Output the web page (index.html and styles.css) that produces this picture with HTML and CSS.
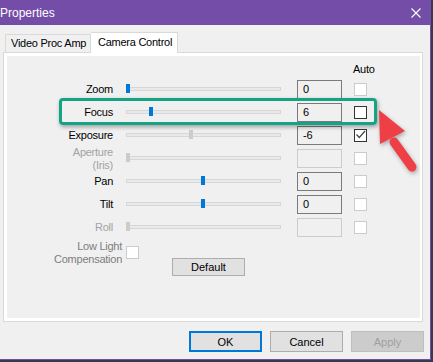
FILE: index.html
```html
<!DOCTYPE html>
<html>
<head>
    <meta charset="utf-8">
    <title>Properties</title>
    <link rel="stylesheet" href="styles.css">
</head>
<body>
    <div class="window">
        <div class="titlebar">
            <span class="title">Properties</span>
            <svg class="close" width="10" height="10" viewBox="0 0 10 10"><path d="M0.5 0.5L9.5 9.5M9.5 0.5L0.5 9.5" stroke="#fff" stroke-width="1.1" fill="none"/></svg>
        </div>

        <div class="tabs">
            <div class="tab">Video Proc Amp</div>
            <div class="tab active">Camera Control</div>
        </div>

        <div class="panel">
            <div class="page">
                <div class="auto-head">Auto</div>

                <div class="rows">
                    <div class="row">
                        <div class="label">Zoom</div>
                        <div class="slider"><div class="track"></div><div class="thumb" style="left:0px"></div></div>
                        <div class="edit">0</div>
                        <div class="check off"></div>
                    </div>
                    <div class="row">
                        <div class="label">Focus</div>
                        <div class="slider"><div class="track"></div><div class="thumb" style="left:23px"></div></div>
                        <div class="edit">6</div>
                        <div class="check"></div>
                    </div>
                    <div class="row">
                        <div class="label">Exposure</div>
                        <div class="slider"><div class="track"></div><div class="thumb grey" style="left:63px"></div></div>
                        <div class="edit">-6</div>
                        <div class="check">
                            <svg width="11" height="11" viewBox="0 0 11 11"><path d="M1.5 4.5L4.3 7.5L10 1" stroke="#444" stroke-width="1.2" fill="none"/></svg>
                        </div>
                    </div>
                    <div class="row">
                        <div class="label dim two">Aperture<br>(Iris)</div>
                        <div class="slider"><div class="track"></div><div class="thumb grey" style="left:0px"></div></div>
                        <div class="edit off"></div>
                        <div class="check off"></div>
                    </div>
                    <div class="row">
                        <div class="label">Pan</div>
                        <div class="slider"><div class="track"></div><div class="thumb" style="left:75px"></div></div>
                        <div class="edit">0</div>
                        <div class="check off"></div>
                    </div>
                    <div class="row">
                        <div class="label">Tilt</div>
                        <div class="slider"><div class="track"></div><div class="thumb" style="left:75px"></div></div>
                        <div class="edit">0</div>
                        <div class="check off"></div>
                    </div>
                    <div class="row">
                        <div class="label dim">Roll</div>
                        <div class="slider"><div class="track"></div><div class="thumb grey" style="left:0px"></div></div>
                        <div class="edit off"></div>
                        <div class="check off"></div>
                    </div>
                </div>

                <div class="extra">
                    <div class="label low two">Low Light<br>Compensation</div>
                    <div class="check off"></div>
                    <button class="btn default">Default</button>
                </div>
            </div>
        </div>

        <div class="buttons">
            <button class="btn ok">OK</button>
            <button class="btn">Cancel</button>
            <button class="btn disabled">Apply</button>
        </div>

        <!-- annotations drawn on top of the screenshot -->
        <div class="highlight"></div>
        <svg class="arrow" width="60" height="80" viewBox="0 0 60 80">
            <line x1="24" y1="42" x2="42" y2="67" stroke="#ef3f46" stroke-width="9" stroke-linecap="round"/>
            <polygon points="9,10 10,44 35,31" fill="#ef3f46"/>
        </svg>
    </div>
</body>
</html>
```

FILE: styles.css
```css
body{
    margin: 0;
    padding: 0;
    width: 433px;
    height: 362px;
    overflow: hidden;
    background-color: #363a4b;
    font-family: "Liberation Sans", Arial, sans-serif;
    font-size: 11px;
    letter-spacing: -0.25px;
    white-space: nowrap;
    color: #000;}

.window{
    position: relative;
    width: 430px;
    height: 359px;
    background-color: #f0f0f0;
    border-right: 1px solid #744da9;
    border-bottom: 1px solid #744da9;}

.titlebar{
    height: 25px;
    background-color: #744da9;
    color: #fff;
    display: flex;
    align-items: center;
    justify-content: space-between;
    padding-right: 9px;}

.title{
    font-size: 12px;
    letter-spacing: 0;}

/* tabs */
.tabs{
    display: flex;
    align-items: flex-end;
    height: 21px;
    padding-top: 7px;
    padding-left: 5px;}

.tab{
    box-sizing: border-box;
    height: 18px;
    margin-bottom: 1px;
    padding: 0 5px;
    width: 86px;
    border: 1px solid #d9d9d9;
    border-bottom: none;
    line-height: 17px;
    background-color: #f0f0f0;}

.tab.active{
    position: relative;
    z-index: 1;
    width: 87px;
    height: 21px;
    margin-bottom: 0;
    padding-left: 7px;
    line-height: 19px;
    background-color: #fff;
    border-left: none;}

.panel{
    box-sizing: border-box;
    height: 270px;
    margin: -1px 7px 0 3px;
    border: 1px solid #d9d9d9;
    background-color: #fff;
    padding: 3px 2px 3px 3px;}

.page{
    height: 100%;
    background-color: #f0f0f0;
    padding-top: 6px;
    box-sizing: border-box;}

.auto-head{
    height: 14px;
    line-height: 14px;
    margin-left: 346px;}

.rows{
    margin-top: 4px;
    display: flex;
    flex-direction: column;
    gap: 4px;}

.row{
    display: flex;
    align-items: center;
    height: 19px;}

.label{
    width: 106px;
    text-align: right;
    line-height: 19px;
    flex-shrink: 0;}

.label.two{
    line-height: 13px;}

.label.dim{color: #a2a2a2;}

.slider{
    position: relative;
    align-self: stretch;
    width: 155px;
    margin-left: 13px;}

.track{
    box-sizing: border-box;
    height: 4px;
    margin-top: 7px;
    background-color: #e7eaea;
    border: 1px solid #d6d6d6;}

.thumb{
    position: absolute;
    top: 4px;
    width: 4px;
    height: 9px;
    background-color: #0078d7;}

.thumb.grey{background-color: #cccccc;}

.edit{
    box-sizing: border-box;
    width: 45px;
    height: 19px;
    margin-left: 16px;
    padding-left: 5px;
    line-height: 17px;
    border: 1px solid #7a7a7a;
    background-color: #f0f0f0;}

.edit.off{border-color: #cccccc;}

.check{
    box-sizing: border-box;
    width: 13px;
    height: 13px;
    margin-left: 12px;
    border: 1px solid #333;
    background-color: #fff;
    display: flex;
    align-items: center;
    justify-content: center;}

.check.off{border-color: #cccccc;}

.extra{
    display: flex;
    align-items: flex-start;
    margin-top: 3px;}

.label.low{
    width: 115px;
    color: #7d7d7d;}

.extra .check{
    margin-left: 4px;
    margin-top: 6px;}

.btn{
    box-sizing: border-box;
    width: 73px;
    height: 21px;
    padding: 0;
    font: inherit;
    color: #000;
    background-color: #e1e1e1;
    border: 1px solid #adadad;}

.btn.default{
    height: 18px;
    margin-left: 33px;
    margin-top: 18px;}

.buttons{
    display: flex;
    justify-content: flex-end;
    gap: 8px;
    margin-top: 9px;
    padding-right: 6px;}

.btn.ok{border: 2px solid #0078d7;}

.btn.disabled{
    background-color: #cccccc;
    border-color: #bfbfbf;
    color: #a0a0a0;}

/* annotation overlays */
.highlight{
    position: absolute;
    left: 59px;
    top: 98px;
    width: 318px;
    height: 27px;
    box-sizing: border-box;
    border: 3px solid #13a485;
    border-radius: 4px;
    box-shadow: 1px 2px 4px rgba(0,0,0,0.35);}

.arrow{
    position: absolute;
    left: 370px;
    top: 100px;
    filter: drop-shadow(1px 2px 2px rgba(0,0,0,0.3));}
```
